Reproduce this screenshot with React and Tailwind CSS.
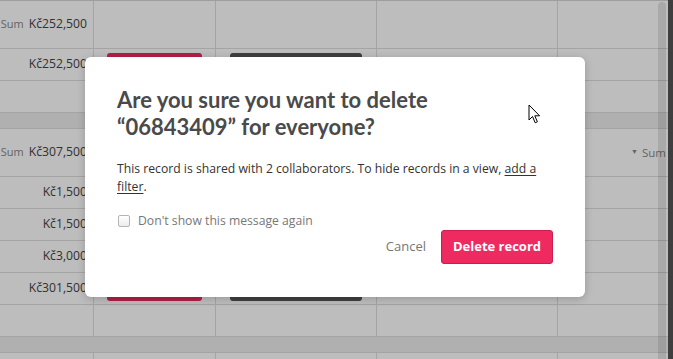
import { useState } from "react";

const cellText = "text-[12.2px] text-[#444]";

function Row({ h = "h-[32px]", children }) {
  return <div className={`flex shrink-0 ${h} border-b border-[#dedede] bg-white`}>{children}</div>;
}

function Cells({ c1, c2, c3, c5 }) {
  return (
    <>
      <div className="w-[94px] shrink-0 border-r border-[#dedede] flex items-center justify-end pr-[6px] overflow-hidden">{c1}</div>
      <div className="w-[122px] shrink-0 border-r border-[#dedede] flex items-center pl-[13px]">{c2}</div>
      <div className="w-[161px] shrink-0 border-r border-[#dedede] flex items-center pl-[14px]">{c3}</div>
      <div className="w-[181px] shrink-0 border-r border-[#dedede]" />
      <div className="flex-1 flex items-center justify-end overflow-hidden">{c5}</div>
    </>
  );
}

function Band() {
  return <div className="h-[16px] shrink-0 border-b border-[#dedede] bg-[#eeeeee]" />;
}

function SumCell({ value }) {
  return (
    <span className="flex items-baseline gap-[5px] whitespace-nowrap">
      <span className="text-[11px] text-[#888]">Sum</span>
      <span className={cellText}>{value}</span>
    </span>
  );
}

const RedBtn = () => <div className="w-[95px] h-[24px] rounded-[3px] bg-[#f22a5c]" />;
const DarkBtn = () => <div className="w-[132px] h-[24px] rounded-[3px] bg-[#565656]" />;

export default function App() {
  const [dontShow, setDontShow] = useState(false);

  return (
    <div
      className="relative w-[673px] h-[359px] overflow-hidden bg-white"
      style={{ fontFamily: '"Open Sans", "Liberation Sans", sans-serif' }}
    >
      {/* grid behind the modal */}
      <div className="flex h-full">
        <div className="flex-1 flex flex-col border-t border-[#d6d6d6]">
          <Row h="h-[48px]">
            <Cells c1={<SumCell value="Kč252,500" />} />
          </Row>
          <Row>
            <Cells c1={<span className={cellText}>Kč252,500</span>} c2={<RedBtn />} c3={<DarkBtn />} />
          </Row>
          <Row>
            <Cells />
          </Row>
          <Band />
          <Row h="h-[48px]">
            <Cells
              c1={<SumCell value="Kč307,500" />}
              c5={
                <span className="flex items-center gap-[4px] whitespace-nowrap text-[11.5px] text-[#888] pr-[2px]">
                  <span className="text-[7px]">▼</span>Sum
                </span>
              }
            />
          </Row>
          <Row>
            <Cells c1={<span className={cellText}>Kč1,500</span>} />
          </Row>
          <Row>
            <Cells c1={<span className={cellText}>Kč1,500</span>} />
          </Row>
          <Row>
            <Cells c1={<span className={cellText}>Kč3,000</span>} />
          </Row>
          <Row>
            <Cells c1={<span className={cellText}>Kč301,500</span>} c2={<RedBtn />} c3={<DarkBtn />} />
          </Row>
          <Row>
            <Cells />
          </Row>
          <Band />
          <Row>
            <Cells />
          </Row>
        </div>
        <div className="w-[5px] shrink-0 bg-[#555]" />
      </div>

      {/* scrollbar thumb */}
      <div className="absolute left-[658px] top-[2px] w-[8px] h-[360px] rounded-t-[4px] bg-black/[0.1]" />

      {/* dimming overlay */}
      <div className="absolute inset-0 bg-black/[0.26]" />

      {/* dialog */}
      <div className="absolute left-[85px] top-[57px] w-[500px] h-[240px] rounded-[6px] bg-white shadow-[0_2px_8px_rgba(0,0,0,0.2)] px-[32px] pt-[29px] flex flex-col">
        <h2
          className="text-[22px] leading-[27px] font-bold text-[#4a4a4a]"
          style={{ fontFamily: 'Lato, "Liberation Sans", sans-serif' }}
        >
          Are you sure you want to delete
          <br />
          “06843409” for everyone?
        </h2>
        <p className="mt-[20px] text-[12.2px] leading-[18px] text-[#333]">
          This record is shared with 2 collaborators. To hide records in a view,{" "}
          <span className="underline underline-offset-2">add a</span>{" "}
          <span className="underline underline-offset-2">filter</span>.
        </p>
        <label className="mt-[17px] flex items-center gap-[8px] text-[12.2px] text-[#777] leading-[16px] cursor-pointer">
          <input
            type="checkbox"
            checked={dontShow}
            onChange={(e) => setDontShow(e.target.checked)}
            className="w-[12px] h-[12px] m-0 ml-[1px] appearance-none rounded-[2px] border border-[#b5b5b5] bg-gradient-to-b from-white to-[#ececec]"
          />
          Don't show this message again
        </label>
        <div className="mt-[1px] flex items-center justify-end gap-[15px]">
          <button className="text-[13px] text-[#777]">Cancel</button>
          <button className="w-[112px] h-[34px] rounded-[3px] border border-[#c81f4e] bg-[#ee2a60] text-white text-[13px] font-bold">
            Delete record
          </button>
        </div>
      </div>

      {/* mouse pointer */}
      <svg className="absolute left-[528px] top-[104px]" width="14" height="21" viewBox="0 0 14 21">
        <path
          d="M1 1 L1 16 L4.5 12.5 L7.2 18.8 L9.4 17.8 L6.8 11.8 L11.6 11.8 Z"
          fill="white"
          stroke="black"
          strokeWidth="1"
          strokeLinejoin="round"
        />
      </svg>
    </div>
  );
}
